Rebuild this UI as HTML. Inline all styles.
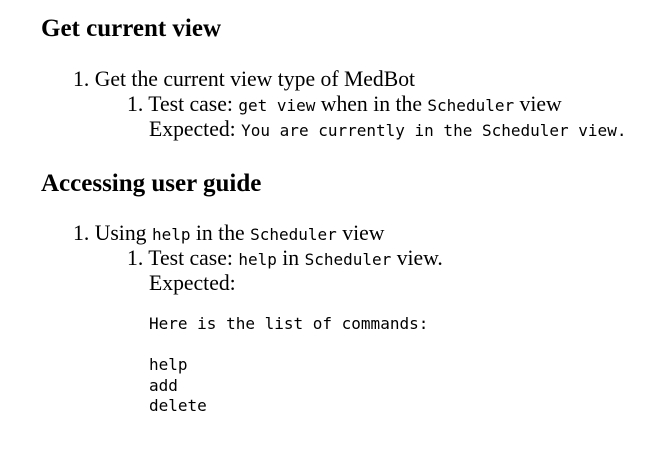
<!DOCTYPE html>
<html><head><style>
body{margin:0;width:668px;height:453px;background:#fff;color:#000;font-family:"Liberation Serif",serif;position:relative;overflow:hidden}
.a{position:absolute;white-space:pre;font-size:21.7px;line-height:25px}
.h{position:absolute;font-weight:bold;font-size:25px;line-height:28px;white-space:pre}
code,.m{font-family:"DejaVu Sans Mono","Liberation Mono",monospace;font-size:16px}
.m{position:absolute;line-height:20.5px;white-space:pre}
</style></head><body>
<div class="h" style="left:41px;top:15px">Get current view</div>
<div class="a" style="left:73px;top:67px">1. Get the current view type of MedBot</div>
<div class="a" style="left:127px;top:92px">1. Test case: <code>get view</code> when in the <code>Scheduler</code> view</div>
<div class="a" style="left:149px;top:117px">Expected: <code>You are currently in the Scheduler view.</code></div>
<div class="h" style="left:41px;top:170px">Accessing user guide</div>
<div class="a" style="left:73px;top:221px">1. Using <code>help</code> in the <code>Scheduler</code> view</div>
<div class="a" style="left:127px;top:246px">1. Test case: <code>help</code> in <code>Scheduler</code> view.</div>
<div class="a" style="left:149px;top:271px">Expected:</div>
<div class="m" style="left:149px;top:314px">Here is the list of commands:</div>
<div class="m" style="left:149px;top:355px">help
add
delete</div>
</body></html>
